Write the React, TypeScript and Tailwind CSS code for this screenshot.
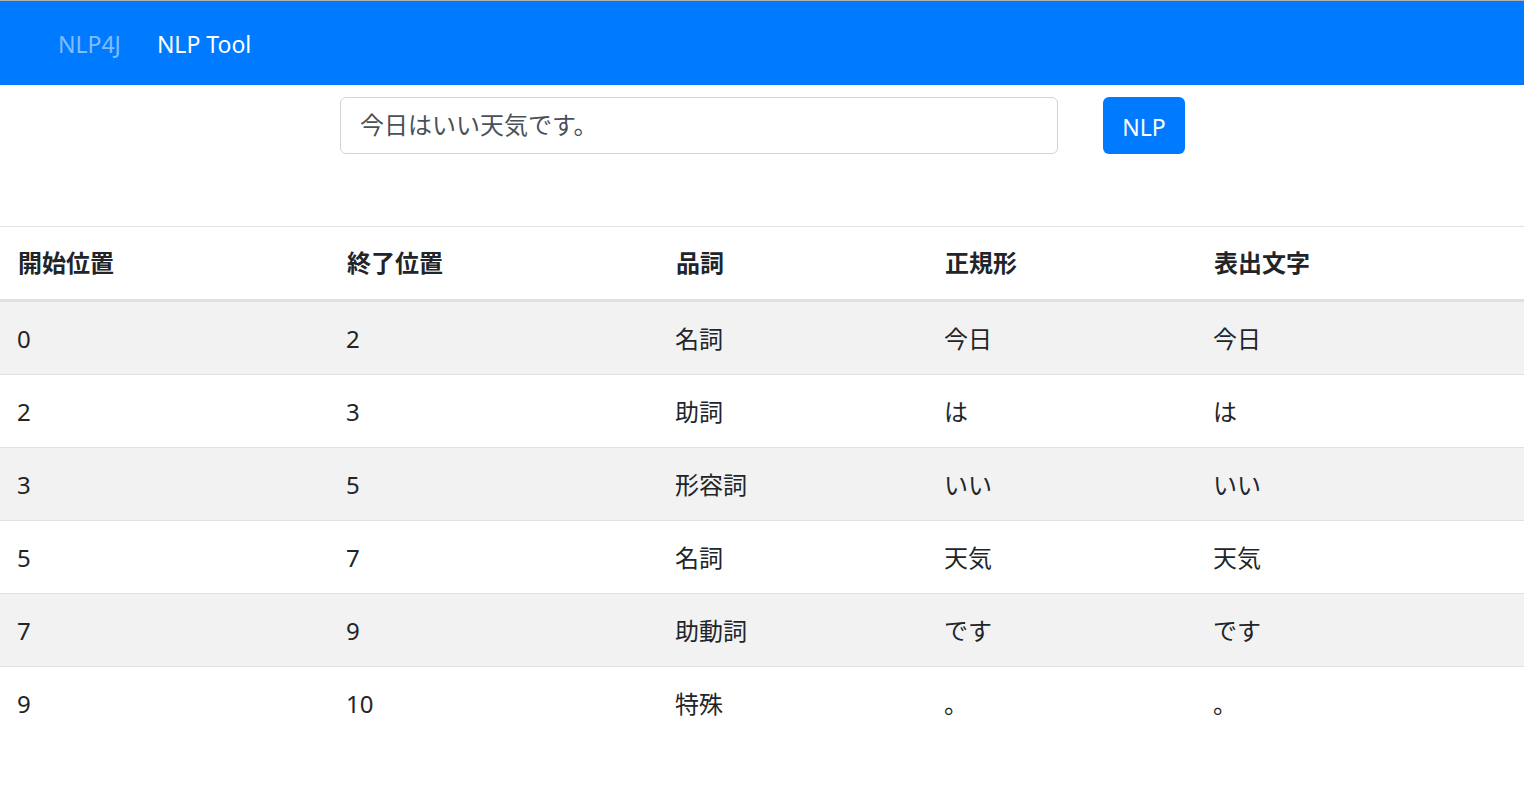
const rows: string[][] = [
  ['0', '2', '名詞', '今日', '今日'],
  ['2', '3', '助詞', 'は', 'は'],
  ['3', '5', '形容詞', 'いい', 'いい'],
  ['5', '7', '名詞', '天気', '天気'],
  ['7', '9', '助動詞', 'です', 'です'],
  ['9', '10', '特殊', '。', '。'],
];

const headers = ['開始位置', '終了位置', '品詞', '正規形', '表出文字'];
const widths = ['w-[329px]', 'w-[329px]', 'w-[269px]', 'w-[269px]', ''];

export default function App() {
  return (
    <div className="min-h-screen bg-white text-[#212529] font-['Noto_Sans','Noto_Sans_CJK_JP',sans-serif] text-[24px] leading-[36px]">
      <nav className="h-[85px] border-t border-[#b0b0b0] bg-[#007bff] flex items-center pt-[2px] pl-[58px] gap-[36px]">
        <span className="text-[23px] text-white/50">NLP4J</span>
        <span className="text-[23px] text-white">NLP Tool</span>
      </nav>

      <div className="flex items-start pt-[12px] pl-[340px] gap-[45px]">
        <input
          defaultValue="今日はいい天気です。"
          className="w-[718px] h-[57px] rounded-[6px] border border-[#ced4da] px-[19px] pb-[5px] text-[24px] text-[#495057] outline-none font-['Noto_Sans','Noto_Sans_CJK_JP',sans-serif]"
        />
        <button className="h-[57px] w-[82px] rounded-[6px] bg-[#007bff] text-white text-[23px] pt-[2px]">NLP</button>
      </div>

      <table className="mt-[72px] w-full border-collapse">
        <thead>
          <tr className="border-t border-[#dee2e6]">
            {headers.map((h, i) => (
              <th
                key={h}
                className={`${widths[i]} text-left font-bold px-[18px] pt-[18px] pb-[18px] border-b-[3px] border-[#dee2e6]`}
              >
                {h}
              </th>
            ))}
          </tr>
        </thead>
        <tbody>
          {rows.map((r, ri) => (
            <tr key={ri} className={ri % 2 === 0 ? 'bg-[#f2f2f2]' : 'bg-white'}>
              {r.map((c, ci) => (
                <td key={ci} className="pl-[17px] pr-[18px] pt-[19px] pb-[17px] border-t border-[#dee2e6]">
                  {c}
                </td>
              ))}
            </tr>
          ))}
        </tbody>
      </table>
    </div>
  );
}
